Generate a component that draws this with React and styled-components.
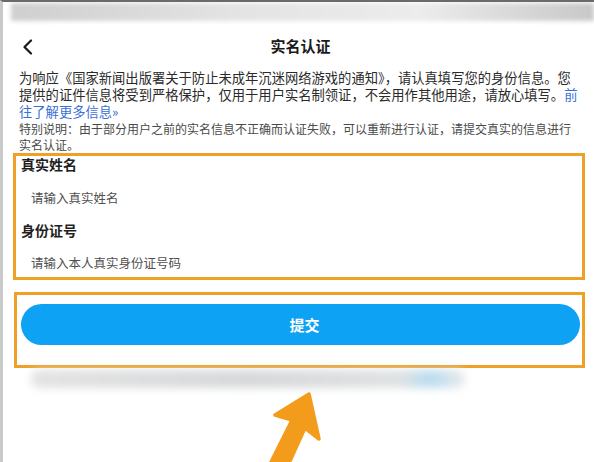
import React from "react";
import styled, { createGlobalStyle } from "styled-components";

const GlobalStyle = createGlobalStyle`
  html, body {
    margin: 0;
    padding: 0;
    background: #fff;
  }
  body {
    width: 594px;
    height: 462px;
    overflow: hidden;
    font-family: "Noto Sans CJK SC", "Noto Sans", sans-serif;
  }
`;

const Screen = styled.div`
  position: relative;
  width: 594px;
  height: 462px;
  overflow: hidden;
  background: #fff;
  border-left: 3px solid #c9c9c9;
  border-top: 2px solid #6a6a6a;
  box-sizing: border-box;
`;

const TopBlur = styled.div`
  height: 18px;
  margin: 1px 0 0 8px;
  background: linear-gradient(90deg, #cfcfcf 0%, #e4e4e4 40%, #ececec 70%, #c8c8c8 100%);
  filter: blur(2px);
`;

const Header = styled.div`
  height: 48px;
  display: flex;
  align-items: center;
  justify-content: center;
  position: relative;
`;

const Back = styled.div`
  position: absolute;
  left: 19px;
  top: 18px;
  display: flex;
`;

const Title = styled.h1`
  margin: 0;
  font-size: 15px;
  font-weight: 700;
  color: #1a1a1a;
  padding-left: 4px;
`;

const Intro = styled.p`
  margin: 0;
  padding: 0 10px 0 16px;
  font-size: 13.3px;
  line-height: 17px;
  color: #2a2a2a;
  white-space: nowrap;
`;

const More = styled.span`
  color: #3b6fd6;
`;

const Note = styled.p`
  margin: 1px 0 0;
  padding: 0 10px 0 16px;
  font-size: 12px;
  line-height: 16px;
  color: #4a4a4a;
  white-space: nowrap;
`;

const Frame = styled.div`
  margin: ${(p) => p.$mt}px 9px 0 ${(p) => p.$ml}px;
  border: 3px solid #efa026;
  box-sizing: border-box;
  height: ${(p) => p.$h}px;
  padding: ${(p) => p.$pad};
`;

const Field = styled.div`
  display: flex;
  flex-direction: column;
`;

const Label = styled.div`
  font-size: 14px;
  font-weight: 700;
  line-height: 16px;
  color: #1f1f1f;
  margin-left: 2px;
`;

const Input = styled.div`
  padding: ${(p) => p.$pt}px 0 ${(p) => p.$pb}px 12px;
  line-height: 18px;
  font-size: 12.5px;
  color: #505050;
`;

const Button = styled.div`
  height: 41px;
  border-radius: 21px;
  background: #0ea2f4;
  color: #fff;
  font-size: 15px;
  font-weight: 700;
  display: flex;
  align-items: center;
  justify-content: center;
  padding-left: 8px;
`;

const BlurBar = styled.div`
  margin: 2px 0 0 28px;
  width: 434px;
  height: 18px;
  border-radius: 8px;
  background: linear-gradient(90deg, #e3e3e3 0%, #d6d8da 50%, #dfe2e4 85%, #b9dcf0 92%, #eaeaea 100%);
  filter: blur(4px);
`;

const Arrow = styled.svg`
  position: absolute;
  left: 0;
  top: 0;
  pointer-events: none;
`;

export default function App() {
  return (
    <>
      <GlobalStyle />
      <Screen>
        <TopBlur />
        <Header>
          <Back>
            <svg width="12" height="16" viewBox="0 0 12 16">
              <path d="M9 1.5 L2.5 8 L9 14.5" fill="none" stroke="#1a1a1a" strokeWidth="2.2" strokeLinecap="round" strokeLinejoin="round" />
            </svg>
          </Back>
          <Title>实名认证</Title>
        </Header>
        <Intro>
          为响应《国家新闻出版署关于防止未成年沉迷网络游戏的通知》，请认真填写您的身份信息。您
          <br />
          提供的证件信息将受到严格保护，仅用于用户实名制领证，不会用作其他用途，请放心填写。<More>前</More>
          <br />
          <More>往了解更多信息»</More>
        </Intro>
        <Note>
          特别说明：由于部分用户之前的实名信息不正确而认证失败，可以重新进行认证，请提交真实的信息进行
          <br />
          实名认证。
        </Note>
        <Frame $mt={0} $ml={10} $h={127} $pad="0 0 0 3px">
          <Field>
            <Label>真实姓名</Label>
            <Input $pt={17} $pb={15}>请输入真实姓名</Input>
          </Field>
          <Field>
            <Label>身份证号</Label>
            <Input $pt={16} $pb={0}>请输入本人真实身份证号码</Input>
          </Field>
        </Frame>
        <Frame $mt={12} $ml={11} $h={76} $pad="9px 2px 0 4px">
          <Button>提交</Button>
        </Frame>
        <BlurBar />
        <Arrow width="594" height="462" viewBox="0 0 594 462">
          <path
            d="M306 392 L272 413 L289 418 L263 470 L282 470 L302 426 L316 437 Z"
            fill="#f39c1c"
            stroke="#f39c1c"
            strokeWidth="3.5"
            strokeLinejoin="round"
          />
        </Arrow>
      </Screen>
    </>
  );
}
